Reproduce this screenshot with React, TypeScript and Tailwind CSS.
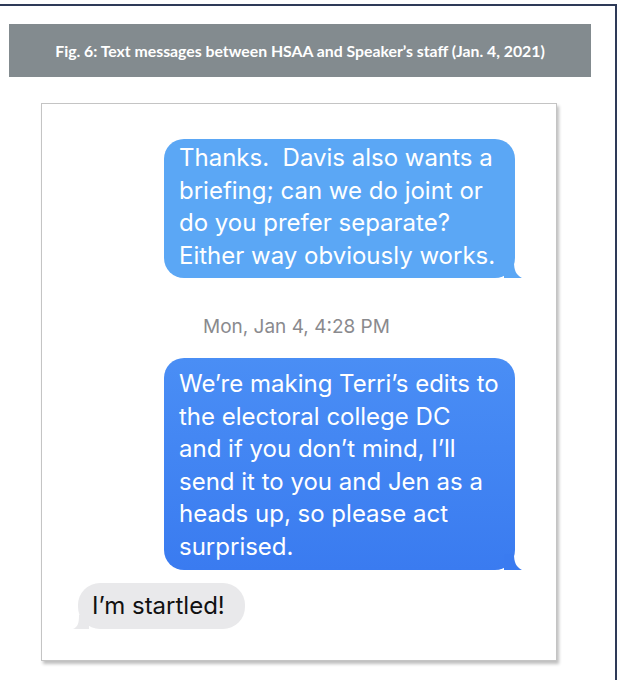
export default function App() {
  return (
    <div className="h-[680px] w-[622px] overflow-hidden bg-white">
      {/* page frame: only top and right edges are visible in the crop */}
      <div className="mt-[4px] h-[700px] w-[617px] border-t-2 border-r-2 border-[#2e3a58] pt-[18px]">
        <div className="ml-[9px] flex h-[53px] w-[582px] items-center justify-center bg-[#838b8f]">
          <p className="font-['Lato',sans-serif] text-[15.8px] font-bold text-white">
            Fig. 6: Text messages between HSAA and Speaker’s staff (Jan. 4, 2021)
          </p>
        </div>

        {/* screenshot card */}
        <div className="ml-[41px] mt-[26px] flex h-[558px] w-[516px] flex-col border border-[#c4c4c4] bg-white pt-[35px] shadow-[2px_3px_3px_rgba(0,0,0,0.25)] font-['Inter',sans-serif]">
          <div className="flex justify-end pr-[41px]">
            <Bubble color="bg-[#5ba7f5]" fill="#5ba7f5" pad="pt-[3px] pb-[6px]">
              {["Thanks.\u00a0 Davis also wants a", "briefing; can we do joint or", "do you prefer separate?", "Either way obviously works."]}
            </Bubble>
          </div>

          <p className="mt-[37px] pl-[161px] text-[19px] leading-[24px] text-[#8a8a8e]">
            Mon, Jan 4, 4:28 PM
          </p>

          <div className="mt-[19px] flex justify-end pr-[41px]">
            <Bubble color="bg-gradient-to-b from-[#4a8ef5] to-[#3a7bf0]" fill="#3a7bf0" pad="pt-[10px] pb-[7px]">
              {[
                "We’re making Terri’s edits to",
                "the electoral college DC",
                "and if you don’t mind, I’ll",
                "send it to you and Jen as a",
                "heads up, so please act",
                "surprised.",
              ]}
            </Bubble>
          </div>

          <div className="mt-[13px] pl-[36px]">
            <div className="relative inline-block rounded-[22px] bg-[#e9e9eb] pl-[14px] pr-[20px] py-[7px] text-[24px] leading-[32px] text-[#111]">
              I’m startled!
              <svg className="absolute bottom-0 left-[-5px]" width="16" height="14" viewBox="0 0 16 14">
                <path d="M16 0 L16 14 L0 14 C5 12 6 8 6 0 Z" fill="#e9e9eb" />
              </svg>
            </div>
          </div>
        </div>
      </div>
    </div>
  );
}

function Bubble({ children, color, fill, pad }: { children: string[]; color: string; fill: string; pad: string }) {
  return (
    <div className={`relative w-[351px] rounded-[20px] px-[15px] text-[24px] leading-[32.5px] text-white ${pad} ${color}`}>
      {children.map((line) => (
        <div key={line} className="whitespace-nowrap">
          {line}
        </div>
      ))}
      <svg className="absolute bottom-0 right-[-7px]" width="18" height="16" viewBox="0 0 18 16">
        <path d="M0 0 L10 0 C10 8 12 13 18 16 L0 16 Z" fill={fill} />
      </svg>
    </div>
  );
}
